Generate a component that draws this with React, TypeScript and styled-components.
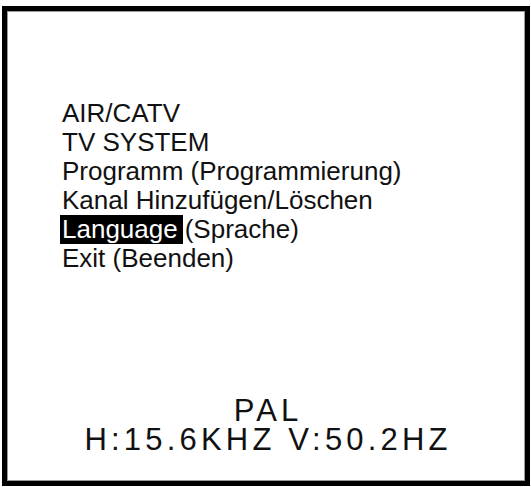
import React from "react";
import styled, { createGlobalStyle } from "styled-components";

const Global = createGlobalStyle`
  html, body { margin: 0; padding: 0; background: #fff; }
  body { font-family: "Liberation Sans", Arial, sans-serif; color: #000; }
`;

const Screen = styled.div`
  box-sizing: border-box;
  margin: 6px 0 0 2px;
  width: 528px;
  height: 480px;
  border: 5px solid #000;
  box-shadow: inset 0 0 0 1px #9a9a9a;
  background: #fff;
  display: flex;
  flex-direction: column;
`;

const Menu = styled.ul`
  list-style: none;
  margin: 0;
  padding: 88px 0 0 55px;
  display: flex;
  flex-direction: column;
`;

const Item = styled.li`
  font-size: 26px;
  line-height: 29px;
  color: #111;
  white-space: nowrap;
`;

const Selected = styled.span`
  display: inline-block;
  background: #000;
  color: #fff;
  margin-left: -2px;
  padding: 0 5px 0 2px;
  margin-right: 2px;
`;

const Footer = styled.div`
  margin-top: auto;
  padding-bottom: 28px;
  display: flex;
  flex-direction: column;
  align-items: center;
  gap: 3px;
`;

const Status = styled.div`
  font-size: 31px;
  line-height: 26px;
  letter-spacing: 4.2px;
  padding-left: 4.2px;
  color: #111;
  white-space: nowrap;
`;

export default function App() {
  return (
    <>
      <Global />
      <Screen>
        <Menu>
          <Item>AIR/CATV</Item>
          <Item>TV SYSTEM</Item>
          <Item>Programm (Programmierung)</Item>
          <Item>Kanal Hinzufügen/Löschen</Item>
          <Item>
            <Selected>Language</Selected>(Sprache)
          </Item>
          <Item>Exit (Beenden)</Item>
        </Menu>
        <Footer>
          <Status>PAL</Status>
          <Status>H:15.6KHZ V:50.2HZ</Status>
        </Footer>
      </Screen>
    </>
  );
}
